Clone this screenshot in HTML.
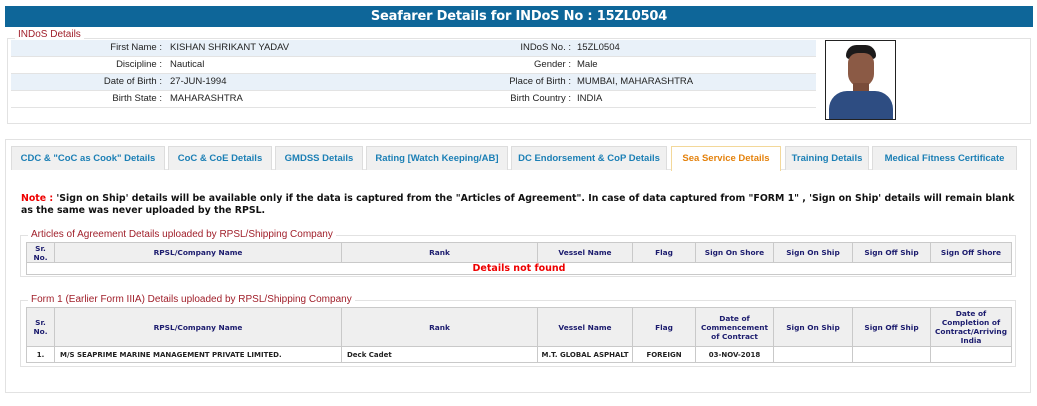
<!DOCTYPE html>
<html><head><meta charset="utf-8"><style>
*{box-sizing:border-box;margin:0;padding:0}
body{width:1037px;height:406px;background:#fff;font-family:"Liberation Sans",Arial,sans-serif;position:relative;overflow:hidden}
.abs{position:absolute}
.title{left:5px;top:6px;width:1028px;height:21px;background:#0e6699;color:#fff;font-weight:bold;font-size:13px;text-align:center;line-height:21px;font-family:"DejaVu Sans",sans-serif;letter-spacing:-0.2px}
.fs{border:1px solid #e2e2e2}
.leg{background:#fff;color:#a01f2a;font-size:10px;padding:0 3px;line-height:11px}
.row{left:11px;width:805px;height:17px;border-bottom:1px solid #e3e3e3;font-size:9.5px;line-height:16px;color:#222;white-space:nowrap}
.row.b{background:#e9f1f9}
.row span{position:absolute}
.l1{right:654px;text-align:right}
.v1{left:159px}
.l2{right:245px;text-align:right}
.v2{left:566px}
.tab{top:146px;height:24px;border:1px solid #ddd;border-bottom:none;background:#f0f0f0;color:#1b7fb5;font-size:9.5px;font-weight:bold;text-align:center;line-height:24px;white-space:nowrap}
.tab.act{background:#fff;border-color:#f3d89a;color:#e4820d;height:25px}
.note{left:21px;top:193px;width:1000px;font-family:"DejaVu Sans",Verdana,sans-serif;font-weight:bold;font-size:9.4px;line-height:12px;color:#111}
table{position:absolute;border-collapse:collapse;table-layout:fixed;font-family:"DejaVu Sans",Verdana,sans-serif;font-weight:bold;font-size:7.4px}
th{background:#efefef;color:#1c1c6e;border:1px solid #c9c9c9;text-align:center;line-height:9px;padding:0}
td{border:1px solid #c9c9c9;color:#222;line-height:14px;padding:0 5px;white-space:nowrap;overflow:hidden;font-size:7px}
</style></head><body>
<div class="abs title">Seafarer Details for INDoS No : 15ZL0504</div>

<div class="abs fs" style="left:7px;top:38px;width:1024px;height:86px"></div>
<div class="abs leg" style="left:15px;top:29px">INDoS Details</div>
<div class="abs row b" style="top:40px"><span class="l1">First Name :</span><span class="v1">KISHAN SHRIKANT YADAV</span><span class="l2">INDoS No. :</span><span class="v2">15ZL0504</span></div>
<div class="abs row" style="top:57px"><span class="l1">Discipline :</span><span class="v1">Nautical</span><span class="l2">Gender :</span><span class="v2">Male</span></div>
<div class="abs row b" style="top:74px"><span class="l1">Date of Birth :</span><span class="v1">27-JUN-1994</span><span class="l2">Place of Birth :</span><span class="v2">MUMBAI, MAHARASHTRA</span></div>
<div class="abs row" style="top:91px"><span class="l1">Birth State :</span><span class="v1">MAHARASHTRA</span><span class="l2">Birth Country :</span><span class="v2">INDIA</span></div>
<div class="abs" style="left:825px;top:40px;width:71px;height:80px;border:1px solid #222;background:#fff;overflow:hidden">
 <div class="abs" style="left:20px;top:4px;width:30px;height:14px;background:#1c1a1a;border-radius:12px 12px 4px 4px"></div>
 <div class="abs" style="left:22px;top:12px;width:26px;height:34px;background:#8b5a45;border-radius:10px 10px 13px 13px"></div>
 <div class="abs" style="left:27px;top:42px;width:16px;height:12px;background:#7a4c3a"></div>
 <div class="abs" style="left:3px;top:50px;width:64px;height:32px;background:#2e4d82;border-radius:18px 18px 0 0"></div>
</div>

<div class="abs fs" style="left:5px;top:139px;width:1026px;height:254px"></div>
<div class="abs" style="left:11px;top:169px;width:1006px;border-top:1px solid #e6e6e6"></div>
<div class="abs tab" style="left:11px;width:154px">CDC &amp; "CoC as Cook" Details</div>
<div class="abs tab" style="left:168px;width:104px">CoC &amp; CoE Details</div>
<div class="abs tab" style="left:275px;width:88px">GMDSS Details</div>
<div class="abs tab" style="left:366px;width:142px">Rating [Watch Keeping/AB]</div>
<div class="abs tab" style="left:511px;width:156px">DC Endorsement &amp; CoP Details</div>
<div class="abs tab act" style="left:671px;width:110px">Sea Service Details</div>
<div class="abs tab" style="left:785px;width:84px">Training Details</div>
<div class="abs tab" style="left:872px;width:145px">Medical Fitness Certificate</div>

<div class="abs note"><span style="color:#e00">Note :</span> 'Sign on Ship' details will be available only if the data is captured from the "Articles of Agreement". In case of data captured from "FORM 1" , 'Sign on Ship' details will remain blank as the same was never uploaded by the RPSL.</div>

<div class="abs fs" style="left:20px;top:235px;width:996px;height:42px"></div>
<div class="abs leg" style="left:28px;top:229px">Articles of Agreement Details uploaded by RPSL/Shipping Company</div>
<table style="left:26px;top:242px;width:985px">
<colgroup><col style="width:28px"><col style="width:287px"><col style="width:196px"><col style="width:95px"><col style="width:63px"><col style="width:78px"><col style="width:79px"><col style="width:78px"><col style="width:81px"></colgroup>
<tr style="height:20px"><th>Sr.<br>No.</th><th>RPSL/Company Name</th><th>Rank</th><th>Vessel Name</th><th>Flag</th><th>Sign On Shore</th><th>Sign On Ship</th><th>Sign Off Ship</th><th>Sign Off Shore</th></tr>
<tr style="height:12px"><td colspan="9" style="text-align:center;color:#e00;font-size:9.5px;line-height:11px">Details not found</td></tr>
</table>

<div class="abs fs" style="left:20px;top:300px;width:996px;height:67px"></div>
<div class="abs leg" style="left:28px;top:294px">Form 1 (Earlier Form IIIA) Details uploaded by RPSL/Shipping Company</div>
<table style="left:26px;top:307px;width:985px">
<colgroup><col style="width:28px"><col style="width:287px"><col style="width:196px"><col style="width:95px"><col style="width:63px"><col style="width:78px"><col style="width:79px"><col style="width:78px"><col style="width:81px"></colgroup>
<tr style="height:39px"><th>Sr.<br>No.</th><th>RPSL/Company Name</th><th>Rank</th><th>Vessel Name</th><th>Flag</th><th>Date of<br>Commencement<br>of Contract</th><th>Sign On Ship</th><th>Sign Off Ship</th><th>Date of<br>Completion of<br>Contract/Arriving<br>India</th></tr>
<tr style="height:16px"><td style="text-align:center;padding:0">1.</td><td>M/S SEAPRIME MARINE MANAGEMENT PRIVATE LIMITED.</td><td>Deck Cadet</td><td style="text-align:center;padding:0">M.T. GLOBAL ASPHALT</td><td style="text-align:center;padding:0">FOREIGN</td><td style="text-align:center;padding:0">03-NOV-2018</td><td></td><td></td><td></td></tr>
</table>
</body></html>
